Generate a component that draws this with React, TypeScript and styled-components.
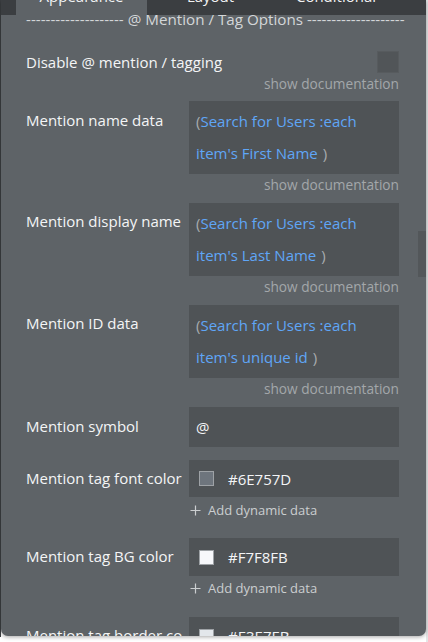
import React from "react";
import styled, { createGlobalStyle } from "styled-components";

const Global = createGlobalStyle`
  html, body { margin: 0; padding: 0; background: #ffffff; }
  body { font-family: "Open Sans", "Liberation Sans", sans-serif; }
  * { box-sizing: border-box; }
`;

const Page = styled.div`
  display: flex;
  width: 428px;
  height: 642px;
  background: #ffffff;
`;

const LeftEdge = styled.div`
  width: 1px;
  background: #3c3f42;
  height: 637px;
`;

const Panel = styled.div`
  position: relative;
  width: 425px;
  height: 636px;
  background: #5e6367;
  border-radius: 0 0 7px 7px;
  box-shadow: 0 1px 4px rgba(0, 0, 0, 0.35);
  overflow: hidden;
`;

const RightEdge = styled.div`
  width: 2px;
  margin-left: auto;
  background: #e4e5e6;
`;

const TabBar = styled.div`
  position: absolute;
  top: 0;
  left: 0;
  right: 0;
  height: 15px;
  background: #3b3e41;
  display: flex;
  padding-left: 15px;
  z-index: 2;
`;

const Tab = styled.div<{ $active?: boolean; $w: number }>`
  width: ${(p) => p.$w}px;
  height: 15px;
  overflow: hidden;
  background: ${(p) => (p.$active ? "#5e6367" : "transparent")};
  color: #f2f3f4;
  font-size: 15px;
  line-height: 15px;
  display: flex;
  justify-content: center;
  align-items: flex-end;
  span { display: block; transform: translateY(-11px); }
`;

const Content = styled.div`
  padding: 9px 27px 0 25px;
  display: flex;
  flex-direction: column;
`;

const Header = styled.div`
  color: #d3d6d8;
  font-size: 15.2px;
  line-height: 20px;
  text-align: center;
  white-space: nowrap;
`;

const Row = styled.div<{ $top: number }>`
  display: grid;
  grid-template-columns: 163px 210px;
  margin-top: ${(p) => p.$top}px;
`;

const Label = styled.div<{ $pad: number }>`
  color: #f4f5f6;
  font-size: 15px;
  line-height: 20px;
  padding-top: ${(p) => p.$pad}px;
  white-space: nowrap;
  overflow: hidden;
  max-width: 156px;
`;

const CheckRow = styled.div<{ $top: number }>`
  display: flex;
  align-items: center;
  justify-content: space-between;
  margin-top: ${(p) => p.$top}px;
  height: 22px;
`;

const CheckLabel = styled.div`
  color: #f4f5f6;
  font-size: 15px;
  line-height: 20px;
  white-space: nowrap;
`;

const Checkbox = styled.div`
  width: 22px;
  height: 22px;
  background: #515558;
  border: 1px solid #575b5e;
`;

const Box = styled.div<{ $h: number; $padTop?: number }>`
  background: #4f5356;
  height: ${(p) => p.$h}px;
  padding: ${(p) => p.$padTop ?? 0}px 8px 0 7px;
  font-size: 15px;
  color: #f4f5f6;
`;

const Expr = styled.div`
  line-height: 32px;
  color: #5fa6f7;
  font-size: 15px;
  white-space: nowrap;
`;

const Paren = styled.span<{ $gap: number }>`
  color: #a8acaf;
  margin: 0 ${(p) => p.$gap}px;
`;

const PlainValue = styled.div`
  line-height: 40px;
  font-size: 15px;
`;

const ColorValue = styled.div<{ $h: number }>`
  display: flex;
  align-items: center;
  height: ${(p) => p.$h}px;
  padding-left: 3px;
  gap: 14px;
  font-size: 15px;
`;

const Swatch = styled.div<{ $c: string }>`
  width: 15px;
  height: 15px;
  background: ${(p) => p.$c};
  border: 1px solid #9ea2a6;
`;

const Doc = styled.div`
  align-self: flex-end;
  color: #a3a7aa;
  font-size: 13.7px;
  line-height: 16px;
  margin-top: 3px;
`;

const Dynamic = styled.div<{ $top: number }>`
  margin-left: 164px;
  margin-top: ${(p) => p.$top}px;
  display: flex;
  align-items: center;
  gap: 7px;
  color: #cbced0;
  font-size: 13px;
  line-height: 16px;
`;

const ScrollThumb = styled.div`
  position: absolute;
  right: 0;
  top: 231px;
  width: 8px;
  height: 46px;
  background: #53575a;
`;

const Plus = () => (
  <svg width="11" height="11" viewBox="0 0 11 11">
    <path d="M5.5 0.5v10M0.5 5.5h10" stroke="#cbced0" strokeWidth="1.2" />
  </svg>
);

const ExprBox = ({ first, second }: { first: string; second: string }) => (
  <Box $h={73} $padTop={4}>
    <Expr>
      <Paren $gap={0}>(</Paren>
      {first}
    </Expr>
    <Expr>
      {second}
      <Paren $gap={5}>)</Paren>
    </Expr>
  </Box>
);

export default function App() {
  return (
    <Page>
      <Global />
      <LeftEdge />
      <Panel>
        <TabBar>
          <Tab $active $w={131}>
            <span>Appearance</span>
          </Tab>
          <Tab $w={127}>
            <span>Layout</span>
          </Tab>
          <Tab $w={124}>
            <span>Conditional</span>
          </Tab>
        </TabBar>
        <ScrollThumb />
        <Content>
          <Header>-------------------- @ Mention / Tag Options --------------------</Header>
          <CheckRow $top={22}>
            <CheckLabel>Disable @ mention / tagging</CheckLabel>
            <Checkbox />
          </CheckRow>
          <Doc>show documentation</Doc>

          <Row $top={9}>
            <Label $pad={9}>Mention name data</Label>
            <ExprBox first="Search for Users :each" second="item's First Name" />
          </Row>
          <Doc>show documentation</Doc>

          <Row $top={10}>
            <Label $pad={8}>Mention display name</Label>
            <ExprBox first="Search for Users :each" second="item's Last Name" />
          </Row>
          <Doc>show documentation</Doc>

          <Row $top={10}>
            <Label $pad={8}>Mention ID data</Label>
            <ExprBox first="Search for Users :each" second="item's unique id" />
          </Row>
          <Doc>show documentation</Doc>

          <Row $top={10}>
            <Label $pad={9}>Mention symbol</Label>
            <Box $h={40}>
              <PlainValue>@</PlainValue>
            </Box>
          </Row>

          <Row $top={13}>
            <Label $pad={8}>Mention tag font color</Label>
            <Box $h={37}>
              <ColorValue $h={37}>
                <Swatch $c="#6E757D" />
                #6E757D
              </ColorValue>
            </Box>
          </Row>
          <Dynamic $top={5}>
            <Plus />
            Add dynamic data
          </Dynamic>

          <Row $top={20}>
            <Label $pad={8}>Mention tag BG color</Label>
            <Box $h={38}>
              <ColorValue $h={38}>
                <Swatch $c="#F7F8FB" />
                #F7F8FB
              </ColorValue>
            </Box>
          </Row>
          <Dynamic $top={4}>
            <Plus />
            Add dynamic data
          </Dynamic>

          <Row $top={21}>
            <Label $pad={8}>Mention tag border color</Label>
            <Box $h={38}>
              <ColorValue $h={38}>
                <Swatch $c="#E3E7EB" />
                #E3E7EB
              </ColorValue>
            </Box>
          </Row>
        </Content>
      </Panel>
      <RightEdge />
    </Page>
  );
}
